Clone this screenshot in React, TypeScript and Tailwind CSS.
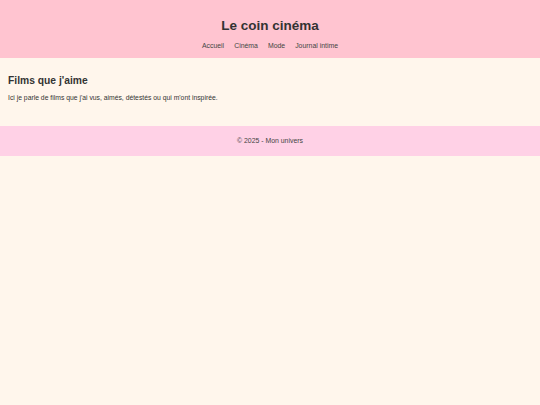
import React from 'react';

const links = ['Accueil', 'Cinéma', 'Mode', 'Journal intime'];

const App: React.FC = () => {
  return (
    <div className="min-h-[405px] bg-[#fff6ec] text-[#333] font-['Liberation_Sans',Arial,sans-serif]">
      {/* Header */}
      <header className="bg-[#ffc4d0] h-[58px] flex flex-col items-center pt-[17px]">
        <h1 className="text-[13.5px] font-bold leading-[18px]">Le coin cinéma</h1>
        <nav className="flex gap-[10px] mt-[6px] text-[6.9px] leading-[10px] text-[#444]">
          {links.map((l) => (
            <a key={l} href="#">{l}</a>
          ))}
        </nav>
      </header>

      {/* Main */}
      <main className="px-[8px] pt-[16px] h-[68px]">
        <h2 className="text-[10.3px] font-bold leading-[14px]">Films que j'aime</h2>
        <p className="text-[6.8px] leading-[10px] mt-[5px]">
          Ici je parle de films que j'ai vus, aimés, détestés ou qui m'ont inspirée.
        </p>
      </main>

      {/* Footer */}
      <footer className="bg-[#ffd1e6] h-[30px] flex items-center justify-center text-[6.9px] text-[#444]">
        © 2025 - Mon univers
      </footer>
    </div>
  );
};

export default App;
